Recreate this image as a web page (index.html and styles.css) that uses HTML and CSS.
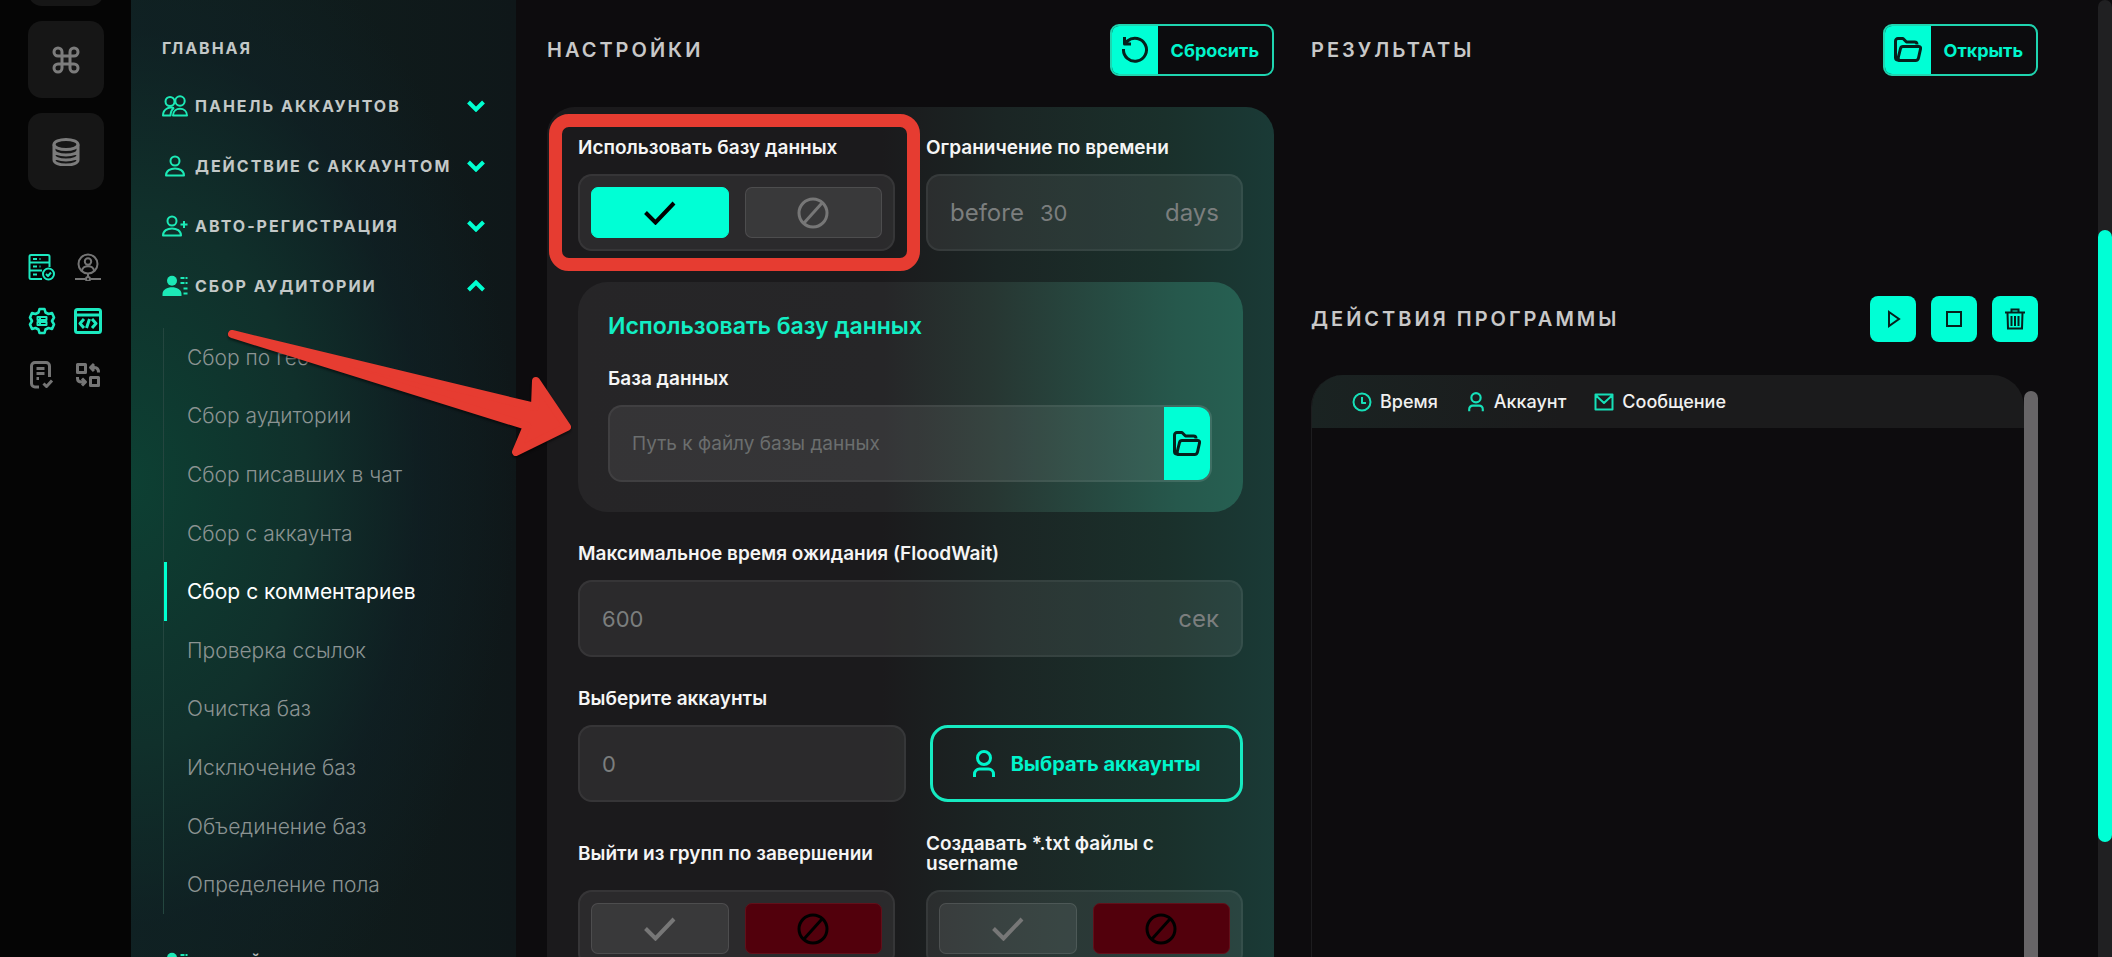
FILE: index.html
```
<!DOCTYPE html>
<html lang="ru">
<head>
  <meta charset="UTF-8">
  <meta name="viewport" content="width=device-width, initial-scale=1.0">
  <title>Сбор с комментариев</title>
  <link rel="stylesheet" href="styles.css">
</head>
<body>

  <!-- icons -->
  <svg class="sprite" aria-hidden="true">
    <symbol id="i-cmd" viewBox="0 0 28 28"><path d="M10 10H18V18H10ZM10 10V6A4 4 0 1 0 6 10H10M18 10H22A4 4 0 1 0 18 6V10M18 18V22A4 4 0 1 0 22 18H18M10 18H6A4 4 0 1 0 10 22V18"/></symbol>
    <symbol id="i-db" viewBox="0 0 28 28"><ellipse cx="14" cy="6.500" rx="12" ry="5"/><path d="M2 6.500V22C2 25 7 27 14 27S26 25 26 22V6.500M2 12C2 15 7 17 14 17S26 15 26 12M2 17C2 20 7 22 14 22S26 20 26 17"/></symbol>
    <symbol id="i-server" viewBox="0 0 28 28"><path d="M14 26H3A1.500 1.500 0 0 1 1.500 24.500V3.500A1.500 1.500 0 0 1 3 2H20A1.500 1.500 0 0 1 21.500 3.500V14M2 9.500H21M2 17.500H14M5 6H9M5 13.500H9M5 21.500H9M11.500 6H12.500M11.500 13.500H12.500"/><circle cx="20.500" cy="21" r="5.500"/><path d="M18 21L20 23L23 19.500"/></symbol>
    <symbol id="i-usernet" viewBox="0 0 28 28"><circle cx="14" cy="11" r="9.500"/><circle cx="14" cy="8.500" r="3.200"/><path d="M8 18C8 11.500 20 11.500 20 18M14 20.500V24M1 26H11.500M16.500 26H27"/><circle cx="14" cy="26" r="2"/></symbol>
    <symbol id="i-gear" viewBox="0 0 28 28"><path stroke-width="2.600" d="M11.500 2H16.500L17.500 5.500L20.500 7L24 6L26 10.500L24 14L26 17.500L24 22L20.500 21L17.500 22.500L16.500 26H11.500L10.500 22.500L7.500 21L4 22L2 17.500L4 14L2 10.500L4 6L7.500 7L10.500 5.500Z"/><path d="M9.500 10H18.500V13H9.500ZM9.500 15H18.500V18H9.500ZM12 10V13M12 15V18"/></symbol>
    <symbol id="i-code" viewBox="0 0 28 28"><rect x="1.500" y="2.500" width="25" height="23" rx="2"/><path d="M2 8H26M10 12L6 16.500L10 21M18 12L22 16.500L18 21M15.500 12L12.500 21"/></symbol>
    <symbol id="i-doc" viewBox="0 0 28 28"><path d="M11 26H7A3.500 3.500 0 0 1 3.500 22.500V5A3.500 3.500 0 0 1 7 1.500H18A3.500 3.500 0 0 1 21.500 5V16M8.500 7.500H16.500M8.500 12.500H16.500M8.500 17.500H11M15.500 22.500L18.500 25.500L24 19.500"/></symbol>
    <symbol id="i-swap" viewBox="0 0 28 28"><path d="M3.500 3.500H11.500V11.500H3.500ZM16.500 16.500H24.500V24.500H16.500ZM20 3L16.500 6.500L20 10M17 6.500H20.500Q24.500 6.500 24.500 11.500M3.500 16V17.500Q3.500 21 7.500 21H11M8 17.500L11.500 21L8 24.500"/></symbol>
    <symbol id="i-users" viewBox="0 0 26 22"><circle cx="8" cy="6.500" r="4.500"/><circle cx="18" cy="6" r="4.700"/><path d="M11 20.500C11 11.500 25 11.500 25 20.500ZM12 13C7 11.500 1 14 1 20.500H8.500C8.500 17 10 14.500 12 13"/></symbol>
    <symbol id="i-user" viewBox="0 0 26 22"><circle cx="13" cy="6" r="4.500"/><path d="M4 20.500C4 11 22 11 22 20.500Z"/></symbol>
    <symbol id="i-useradd" viewBox="0 0 26 22"><circle cx="10" cy="6" r="4.500"/><path d="M1 20.500C1 11 19 11 19 20.500ZM22 6V13M18.500 9.500H25.500"/></symbol>
    <symbol id="i-userlist" viewBox="0 0 26 22"><g fill="currentColor" stroke="none"><circle cx="10" cy="5.800" r="5"/><path d="M.5 21V19C.5 10 19.500 10 19.500 19V21Z"/></g><path d="M18.500 3H25.500M18.500 8H25.500M21.500 13.500H25.500M21.500 18.500H25.500" stroke-dasharray="4 1"/></symbol>
    <symbol id="i-chev" viewBox="0 0 18 12"><path d="M1.500 2L9 9.500L16.500 2"/></symbol>
    <symbol id="i-reset" viewBox="0 0 28 28"><path d="M2.500 13A11.500 11.500 0 1 0 6.500 5L3.500 7.500M3.500 1V8H10"/></symbol>
    <symbol id="i-folder" viewBox="0 0 28 28"><path d="M6 24H4A2.500 2.500 0 0 1 1.500 21.500V5A2.500 2.500 0 0 1 4 2.500H9L12.500 6H20.500A2.500 2.500 0 0 1 23 8.500M9 10.500H24.500Q27 10.500 26.500 13L24.500 22Q24 24.500 21.500 24.500H5Q3.500 24.500 4 22.500L6.500 12.500Q7 10.500 9 10.500Z"/></symbol>
    <symbol id="i-check" viewBox="0 0 32 24"><path d="M1.500 11.500L11.500 21.500L30 2"/></symbol>
    <symbol id="i-ban" viewBox="0 0 32 32"><circle cx="16" cy="16" r="14"/><path d="M7 26L25 6"/></symbol>
    <symbol id="i-person" viewBox="0 0 22 28"><circle cx="11" cy="8" r="6.500"/><path d="M1.500 27V24A5 5 0 0 1 6.500 19H15.500A5 5 0 0 1 20.500 24V27"/></symbol>
    <symbol id="i-clock" viewBox="0 0 20 20"><circle cx="10" cy="10" r="8.500"/><path d="M10 5V11H14"/></symbol>
    <symbol id="i-mail" viewBox="0 0 20 18"><path d="M1.500 1.500H18.500V16.500H1.500ZM2 2.500L10 10L18 2.500"/></symbol>
    <symbol id="i-play" viewBox="0 0 24 24"><path d="M8 5L18 12L8 19Z"/></symbol>
    <symbol id="i-stop" viewBox="0 0 24 24"><rect x="5" y="5" width="14" height="14"/></symbol>
    <symbol id="i-trash" viewBox="0 0 24 24"><path d="M2 5.500H22M8.500 5V2.500H15.500V5M4.500 6L5 21.500H19L19.500 6M8.500 9V19M12 9V19M15.500 9V19"/></symbol>
  </svg>

  <div class="app">

    <nav class="rail">
      <div class="rail-tiles">
        <a href="#" class="tile" aria-label="Обзор"></a>
        <a href="#" class="tile" aria-label="Команды"><svg class="icon icon-28"><use href="#i-cmd"/></svg></a>
        <a href="#" class="tile" aria-label="Базы"><svg class="icon icon-28"><use href="#i-db"/></svg></a>
      </div>
      <div class="rail-icons">
        <a href="#" class="on" aria-label="Сервер"><svg class="icon icon-28"><use href="#i-server"/></svg></a>
        <a href="#" aria-label="Прокси"><svg class="icon icon-28"><use href="#i-usernet"/></svg></a>
        <a href="#" class="on" aria-label="Параметры"><svg class="icon icon-28"><use href="#i-gear"/></svg></a>
        <a href="#" class="on bold" aria-label="Код"><svg class="icon icon-28"><use href="#i-code"/></svg></a>
        <a href="#" class="bold" aria-label="Журнал"><svg class="icon icon-28"><use href="#i-doc"/></svg></a>
        <a href="#" class="bold" aria-label="Обмен"><svg class="icon icon-28"><use href="#i-swap"/></svg></a>
      </div>
    </nav>

    <aside class="sidebar">
      <a href="#" class="menu-home">Главная</a>
      <button class="menu-row"><svg class="icon menu-icon"><use href="#i-users"/></svg><span>Панель аккаунтов</span><svg class="icon chev"><use href="#i-chev"/></svg></button>
      <button class="menu-row"><svg class="icon menu-icon"><use href="#i-user"/></svg><span>Действие с аккаунтом</span><svg class="icon chev"><use href="#i-chev"/></svg></button>
      <button class="menu-row"><svg class="icon menu-icon"><use href="#i-useradd"/></svg><span>Авто-регистрация</span><svg class="icon chev"><use href="#i-chev"/></svg></button>
      <button class="menu-row"><svg class="icon menu-icon"><use href="#i-userlist"/></svg><span>Сбор аудитории</span><svg class="icon chev up"><use href="#i-chev"/></svg></button>
      <div class="submenu">
        <a href="#">Сбор по гео</a>
        <a href="#">Сбор аудитории</a>
        <a href="#">Сбор писавших в чат</a>
        <a href="#">Сбор с аккаунта</a>
        <a href="#" class="active">Сбор с комментариев</a>
        <a href="#">Проверка ссылок</a>
        <a href="#">Очистка баз</a>
        <a href="#">Исключение баз</a>
        <a href="#">Объединение баз</a>
        <a href="#">Определение пола</a>
      </div>
      <button class="menu-row"><svg class="icon menu-icon"><use href="#i-userlist"/></svg><span>Инвайт</span><svg class="icon chev"><use href="#i-chev"/></svg></button>
    </aside>

    <main class="main">

      <section class="column">
        <div class="head">
          <h2>Настройки</h2>
          <button class="split-btn"><span class="split-icon"><svg class="icon icon-28"><use href="#i-reset"/></svg></span><span class="split-text">Сбросить</span></button>
        </div>

        <form class="panel">
          <div class="row">
            <div class="group marked">
              <span class="label" id="l-base">Использовать базу данных</span>
              <div class="toggle" role="radiogroup" aria-labelledby="l-base">
                <label class="opt yes"><input type="radio" name="base" aria-label="Да" checked><svg class="icon check"><use href="#i-check"/></svg></label>
                <label class="opt no"><input type="radio" name="base" aria-label="Нет"><svg class="icon ban"><use href="#i-ban"/></svg></label>
              </div>
            </div>
            <div class="group">
              <label class="label" for="limit">Ограничение по времени</label>
              <div class="field"><span>before</span><input type="text" id="limit" placeholder="30"><span>days</span></div>
            </div>
          </div>

          <div class="subpanel">
            <h3>Использовать базу данных</h3>
            <label class="label" for="path">База данных</label>
            <div class="field path">
              <input type="text" id="path" placeholder="Путь к файлу базы данных">
              <button type="button" class="browse" aria-label="Выбрать файл"><svg class="icon icon-28"><use href="#i-folder"/></svg></button>
            </div>
          </div>

          <div class="group">
            <label class="label" for="flood">Максимальное время ожидания (FloodWait)</label>
            <div class="field"><input type="text" id="flood" placeholder="600"><span>сек</span></div>
          </div>

          <div class="group">
            <label class="label" for="accounts">Выберите аккаунты</label>
            <div class="pick">
              <div class="field"><input type="text" id="accounts" placeholder="0"></div>
              <button type="button" class="pick-btn"><svg class="icon person"><use href="#i-person"/></svg>Выбрать аккаунты</button>
            </div>
          </div>

          <div class="row last">
            <div class="group">
              <span class="label" id="l-leave">Выйти из групп по завершении</span>
              <div class="toggle" role="radiogroup" aria-labelledby="l-leave">
                <label class="opt yes"><input type="radio" name="leave" aria-label="Да"><svg class="icon check"><use href="#i-check"/></svg></label>
                <label class="opt no"><input type="radio" name="leave" aria-label="Нет" checked><svg class="icon ban"><use href="#i-ban"/></svg></label>
              </div>
            </div>
            <div class="group">
              <span class="label" id="l-txt">Создавать *.txt файлы с username</span>
              <div class="toggle" role="radiogroup" aria-labelledby="l-txt">
                <label class="opt yes"><input type="radio" name="txt" aria-label="Да"><svg class="icon check"><use href="#i-check"/></svg></label>
                <label class="opt no"><input type="radio" name="txt" aria-label="Нет" checked><svg class="icon ban"><use href="#i-ban"/></svg></label>
              </div>
            </div>
          </div>
        </form>
      </section>

      <section class="column">
        <div class="head results">
          <h2>Результаты</h2>
          <button class="split-btn"><span class="split-icon"><svg class="icon icon-28"><use href="#i-folder"/></svg></span><span class="split-text">Открыть</span></button>
        </div>
        <div class="head actions">
          <h2>Действия программы</h2>
          <div class="action-btns">
            <button aria-label="Запустить"><svg class="icon"><use href="#i-play"/></svg></button>
            <button aria-label="Остановить"><svg class="icon"><use href="#i-stop"/></svg></button>
            <button aria-label="Очистить"><svg class="icon"><use href="#i-trash"/></svg></button>
          </div>
        </div>
        <div class="log">
          <div class="log-body">
            <table>
              <thead>
                <tr>
                  <th><svg class="icon icon-20"><use href="#i-clock"/></svg>Время</th>
                  <th><svg class="icon icon-20 thick"><use href="#i-person"/></svg>Аккаунт</th>
                  <th><svg class="icon icon-20"><use href="#i-mail"/></svg>Сообщение</th>
                </tr>
              </thead>
            </table>
          </div>
          <div class="log-scroll"></div>
        </div>
      </section>

    </main>

    <div class="page-scroll"><div class="thumb"></div></div>
  </div>

  <svg class="arrow" viewBox="0 0 350 140" aria-hidden="true"><path d="M10 13L313 86L314 60L345 106L294 131L305 105Z"/></svg>

</body>
</html>
```
FILE: styles.css
```
* {
  box-sizing: border-box;
}

body {
  margin: 0;
  height: 100vh;
  overflow: hidden;
  position: relative;
  background: #0d0c0e;
  color: #fff;
  font-family: Inter, "Noto Sans", sans-serif;
}

button, input {
  font-family: inherit;
  margin: 0;
}

button {
  border: 0;
  padding: 0;
  cursor: pointer;
}

a {
  color: inherit;
  text-decoration: none;
}

.sprite {
  position: absolute;
  width: 0;
  height: 0;
}

.icon {
  display: block;
  flex: none;
  fill: none;
  stroke: currentColor;
  stroke-width: 3;
  stroke-linejoin: round;
}

.icon-28 {
  width: 28px;
  height: 28px;
}

.icon-20 {
  width: 20px;
  height: 20px;
}

.app {
  display: grid;
  grid-template-columns: 131px 385px minmax(0, 1fr) 14px;
  height: 100%;
}

/* left rail */
.rail {
  background: #050505;
  padding: 0 27px 0 28px;
}

.rail-tiles {
  display: flex;
  flex-direction: column;
  gap: 15px;
  margin-top: -71px;
}

.tile {
  display: flex;
  align-items: center;
  justify-content: center;
  height: 77px;
  border-radius: 14px;
  background: #161616;
  color: #7c7c7c;
}

.rail-icons {
  display: grid;
  grid-template-columns: 28px 28px;
  column-gap: 18px;
  row-gap: 26px;
  margin-top: 63px;
  color: #757575;
}

.rail-icons .icon {
  stroke-width: 2;
}

.rail-icons .bold .icon {
  stroke-width: 3;
}

.rail-icons .on {
  color: #1ce9c0;
}

/* menu */
.sidebar {
  background:
    radial-gradient(ellipse 100% 62% at 0 50%, #0d4033 0%, #10302b 45%, rgba(15, 33, 38, 0.6) 75%, rgba(15, 25, 28, 0) 100%),
    linear-gradient(90deg, #10211f, #0f1719);
  padding: 18px 31px 0;
  min-height: 0;
  overflow: hidden;
}

.menu-home, .menu-row {
  font-size: 16px;
  font-weight: 700;
  letter-spacing: 2px;
  text-transform: uppercase;
  color: #c3c8c7;
}

.menu-home {
  display: block;
  line-height: 60px;
  margin-bottom: -2px;
}

.menu-row {
  display: flex;
  align-items: center;
  gap: 7px;
  width: 100%;
  height: 60px;
  background: none;
  white-space: nowrap;
}

.menu-icon {
  width: 26px;
  height: 22px;
  color: #1ce9b6;
  stroke-width: 2;
}

.chev {
  width: 18px;
  height: 12px;
  margin-left: auto;
  color: #00ffd0;
  stroke-width: 4;
  stroke-linejoin: miter;
}

.chev.up {
  transform: rotate(180deg);
}

.submenu {
  display: grid;
  grid-auto-rows: 1fr;
  min-height: 586px;
  margin: 12px 0 19px 1px;
  border-left: 1px solid #24463f;
  font-size: 21px;
  font-weight: 300;
  color: #8b9392;
}

.submenu a {
  display: flex;
  align-items: center;
  padding-left: 20px;
  border-left: 3px solid transparent;
}

.submenu .active {
  border-color: #00ffd0;
  color: #fff;
  font-weight: 400;
}

/* content */
.main {
  display: grid;
  grid-template-columns: minmax(0, 1fr) minmax(0, 1fr);
  gap: 37px;
  padding: 24px 60px 0 31px;
  min-height: 0;
}

.column {
  display: flex;
  flex-direction: column;
  min-height: 0;
}

.head {
  display: flex;
  align-items: center;
  justify-content: space-between;
  flex: none;
}

h2 {
  margin: 0;
  font-size: 20px;
  font-weight: 600;
  letter-spacing: 3px;
  text-transform: uppercase;
  color: #c8c8c8;
}

.split-btn {
  display: flex;
  height: 52px;
  overflow: hidden;
  border: 2px solid #1fd5b0;
  border-radius: 9px;
  background: #0c0c0e;
  color: #00f5cc;
  font-size: 18px;
  font-weight: 700;
}

.split-icon {
  display: flex;
  align-items: center;
  justify-content: center;
  width: 46px;
  height: 100%;
  background: #00ffd5;
  color: #06201c;
}

.split-text {
  align-self: center;
  padding: 0 13px;
}

.panel {
  flex: 1 0 auto;
  margin-top: 31px;
  padding: 31px 31px 0;
  border-radius: 28px 28px 0 0;
  background: linear-gradient(90deg, #1b1a1c 0%, #1b1a1c 46%, #1b2524 62%, #1a302b 85%, #1a3a36 100%);
}

.row {
  display: grid;
  grid-template-columns: minmax(0, 1fr) minmax(0, 1fr);
  gap: 31px;
}

.group {
  position: relative;
}

.label {
  display: flex;
  align-items: center;
  height: 20px;
  margin-bottom: 16px;
  font-size: 19px;
  line-height: 20px;
  font-weight: 600;
  color: #f5f5f5;
}

.row.last .label {
  height: 40px;
}

.toggle, .field {
  height: 77px;
  border: 2px solid rgba(255, 255, 255, 0.06);
  border-radius: 14px;
  background: rgba(255, 255, 255, 0.07);
}

.toggle {
  display: grid;
  grid-template-columns: 1fr 1fr;
  gap: 16px;
  padding: 11px;
}

.opt {
  position: relative;
  display: flex;
  align-items: center;
  justify-content: center;
  border: 1px solid rgba(255, 255, 255, 0.1);
  border-radius: 7px;
  background: rgba(255, 255, 255, 0.07);
  color: #777;
  cursor: pointer;
}

.opt input {
  position: absolute;
  opacity: 0;
}

.yes:has(:checked) {
  background: #00ffd5;
  border-color: #00ffd5;
  color: #000;
}

.no:has(:checked) {
  background: #52000c;
  border-color: #62101a;
  color: #000;
}

.check {
  width: 32px;
  height: 24px;
  stroke-width: 4;
  stroke-linejoin: miter;
}

.ban {
  width: 32px;
  height: 32px;
  stroke-width: 3;
}

.field {
  display: flex;
  align-items: center;
  padding: 0 22px;
  gap: 16px;
  min-width: 0;
  font-size: 24px;
  color: #7b7e7e;
}

.field input {
  flex: 1;
  min-width: 0;
  border: 0;
  outline: 0;
  padding: 0;
  background: none;
  font-size: 22px;
  color: #ddd;
}

.field input::placeholder {
  color: #7b7e7e;
  opacity: 1;
}

.subpanel {
  margin-top: 31px;
  padding: 30px 31px 30px 30px;
  border-radius: 30px;
  background: linear-gradient(90deg, #262527 0%, #262628 46%, #273632 62%, #26584c 90%, #266052 100%);
}

h3 {
  margin: 0 0 28px;
  font-size: 23px;
  line-height: 29px;
  font-weight: 600;
  color: #12eec4;
}

.path {
  padding-right: 0;
  overflow: hidden;
}

.field.path input {
  font-size: 19px;
}

.field.path input::placeholder {
  color: #6b6e6e;
}

.browse {
  display: flex;
  align-items: center;
  justify-content: center;
  align-self: stretch;
  width: 46px;
  background: #00ffd5;
  color: #06201c;
}

.group + .group, .subpanel + .group, .row.last {
  margin-top: 32px;
}

.row .group + .group {
  margin-top: 0;
}

.pick {
  display: grid;
  grid-template-columns: minmax(0, 21fr) minmax(0, 20fr);
  gap: 24px;
}

.pick-btn {
  display: flex;
  align-items: center;
  justify-content: center;
  gap: 16px;
  border: 3px solid #16eac1;
  border-radius: 18px;
  background: none;
  color: #00f5cc;
  font-size: 20px;
  font-weight: 700;
}

.person {
  width: 22px;
  height: 28px;
}

/* red frame round the database switch */
.marked::after {
  content: "";
  position: absolute;
  inset: -24px -25px -20px -29px;
  border: 13px solid #e63c31;
  border-radius: 20px;
  pointer-events: none;
}

.results {
  height: 52px;
}

.actions {
  margin-top: 220px;
}

.action-btns {
  display: flex;
  gap: 15px;
}

.action-btns button {
  display: flex;
  align-items: center;
  justify-content: center;
  width: 46px;
  height: 46px;
  border-radius: 8px;
  background: #00ffd5;
  color: #06201c;
}

.action-btns .icon {
  width: 24px;
  height: 24px;
  stroke-width: 2;
  stroke-linejoin: miter;
}

.log {
  display: flex;
  flex: 1;
  min-height: 0;
  margin-top: 33px;
}

.log-body {
  flex: 1;
  overflow: hidden;
  border-left: 1px solid #1d1d1f;
  border-radius: 32px 32px 0 0;
}

.log table {
  width: 100%;
  border-collapse: collapse;
  background: linear-gradient(90deg, #1a2322, #1b1b1c 35%);
}

.log tr {
  display: flex;
  align-items: center;
  gap: 28px;
  height: 53px;
  padding-left: 40px;
}

.log th {
  display: flex;
  align-items: center;
  gap: 8px;
  padding: 0;
  font-size: 18px;
  font-weight: 500;
  color: #f0f0f0;
}

.log th .icon {
  color: #16e0b8;
  stroke-width: 2;
}

.log th .thick {
  stroke-width: 3;
}

.log-scroll {
  width: 14px;
  margin-top: 16px;
  border-radius: 7px 7px 0 0;
  background: #676567;
}

.page-scroll {
  position: relative;
  border-radius: 7px 7px 0 0;
  background: #202022;
}

.thumb {
  position: absolute;
  top: 24%;
  width: 100%;
  height: 64%;
  border-radius: 7px;
  background: #00ffd5;
}

.arrow {
  position: absolute;
  left: 222px;
  top: 321px;
  width: 350px;
  height: 140px;
  filter: drop-shadow(0 2px 1px rgba(0, 0, 0, 0.5));
}

.arrow path {
  fill: #e63c31;
  stroke: #e63c31;
  stroke-width: 8;
  stroke-linejoin: round;
}
```
